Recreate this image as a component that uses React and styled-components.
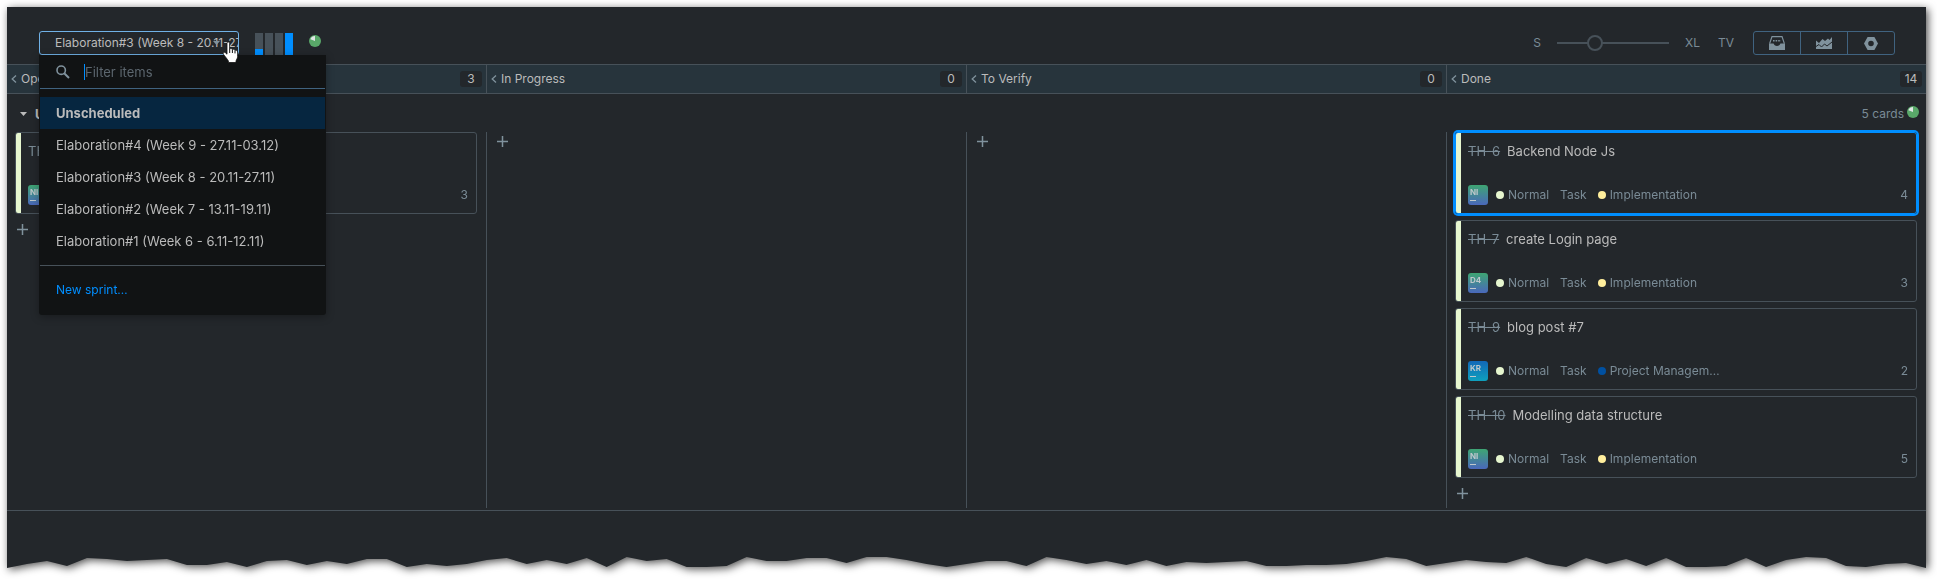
import React, { useState } from "react";
import styled, { createGlobalStyle, css } from "styled-components";

const c = {
  bg: "#23272b",
  header: "#27343c",
  line: "#475159",
  border: "#406380",
  borderHover: "#70b1e6",
  text: "#bbbbbb",
  muted: "#7a8b96",
  icon: "#80929d",
  main: "#008eff",
  popup: "#111314",
  selected: "#062640",
};

const GlobalStyle = createGlobalStyle`
  *, *::before, *::after { box-sizing: border-box; }
  body {
    margin: 0;
    background: #ffffff;
    color: ${c.text};
    font: 13px/20px Inter, "Liberation Sans", sans-serif;
    overflow-x: hidden;
  }
  button, input { font: inherit; color: inherit; }
  button { padding: 0; border: 0; background: none; cursor: pointer; }
  ul { margin: 0; padding: 0; list-style: none; }
  h2, h3 { margin: 0; font: inherit; }
  svg { display: block; }
`;

const Page = styled.div`
  padding: 7px 11px 11px 7px;
`;

const Sheet = styled.div`
  filter: drop-shadow(2px 2px 4px rgba(0, 0, 0, 0.7));
`;

const Board = styled.main`
  background: ${c.bg};
  padding-bottom: 45px;
`;

const TornEdge = styled.svg`
  width: 100%;
  height: 12px;
  fill: ${c.bg};
`;

const Toolbar = styled.header`
  display: flex;
  align-items: center;
  padding: 24px 31px 9px 32px;
`;

const SprintPicker = styled.div`
  position: relative;
  width: 200px;
`;

const SprintButton = styled.button`
  display: flex;
  align-items: center;
  width: 100%;
  height: 24px;
  padding-left: 15px;
  border: 1px solid ${c.borderHover};
  border-radius: 3px;
  font-size: 12px;
  white-space: nowrap;
  overflow: hidden;
`;

const Caret = styled.svg`
  position: absolute;
  right: 19px;
  top: 10px;
`;

const Pointer = styled.svg`
  position: absolute;
  z-index: 3;
  left: 183px;
  top: 10px;
`;

const Menu = styled.div`
  position: absolute;
  z-index: 2;
  top: 24px;
  left: 0;
  width: 287px;
  padding: 0 1px 9px;
  background: ${c.popup};
  border-radius: 0 0 3px 3px;
  box-shadow: 0 2px 8px rgba(0, 0, 0, 0.3);
`;

const Filter = styled.label`
  display: flex;
  align-items: center;
  gap: 14px;
  height: 34px;
  padding-left: 16px;
  border-bottom: 1px solid ${c.border};
`;

const FilterInput = styled.input`
  flex: 1;
  min-width: 0;
  height: 16px;
  padding: 0;
  border: 0;
  border-left: 1px solid ${c.main};
  outline: none;
  background: none;
  &::placeholder { color: #5c666e; opacity: 1; }
`;

const SprintList = styled.ul`
  padding: 8px 0;
  border-bottom: 1px solid ${c.line};
`;

const MenuItem = styled.button`
  display: block;
  width: 100%;
  height: 32px;
  padding-left: 16px;
  text-align: left;
  ${(p) => p.$active && css`background: ${c.selected}; font-weight: 700;`}
  ${(p) => p.$link && css`color: ${c.main}; margin-top: 8px; font-size: 12px;`}
`;

const Chart = styled.div`
  display: flex;
  align-self: flex-end;
  gap: 2px;
  margin-left: 16px;
`;

const Bar = styled.span`
  display: flex;
  align-items: flex-end;
  width: 8px;
  height: 22px;
  background: ${c.line};
  &::after {
    content: "";
    width: 100%;
    height: ${(p) => p.$fill}%;
    background: ${c.main};
  }
`;

const PieSlot = styled.span`
  margin: 0 0 4px 16px;
`;

const SizeControl = styled.div`
  display: flex;
  align-items: center;
  gap: 16px;
  margin-left: auto;
  font-size: 12px;
  color: ${c.muted};
`;

const Range = styled.input`
  appearance: none;
  width: 112px;
  height: 16px;
  margin: 0;
  background: linear-gradient(${c.line}, ${c.line}) center / 100% 2px no-repeat;
  &::-webkit-slider-thumb {
    appearance: none;
    width: 16px;
    height: 16px;
    border: 2px solid ${c.line};
    border-radius: 50%;
    background: ${c.bg};
  }
`;

const TvButton = styled.button`
  margin-left: 2px;
`;

const ButtonGroup = styled.div`
  display: flex;
  margin-left: 19px;
  height: 24px;
  border: 1px solid ${c.border};
  border-radius: 3px;
`;

const IconButton = styled.button`
  display: flex;
  align-items: center;
  justify-content: center;
  width: 47px;
  color: ${c.icon};
  & + & { border-left: 1px solid ${c.border}; }
  &:first-child { width: 46px; }
`;

const Columns = styled.div`
  display: grid;
  grid-template-columns: repeat(4, 1fr);
  margin-left: -1px;
`;

const HeaderRow = styled.div`
  background: ${c.header};
  border: solid ${c.line};
  border-width: 1px 0;
`;

const ColumnHeader = styled.div`
  display: flex;
  align-items: center;
  gap: 3px;
  height: 28px;
  padding: 0 4px;
  border-left: 1px solid ${(p) => (p.$first ? "transparent" : c.line)};
  font-size: 12px;
  h2 { flex: 1; }
`;

const Collapse = styled.button`
  width: 7px;
  color: ${c.icon};
`;

const Count = styled.span`
  min-width: 22px;
  height: 16px;
  border-radius: 3px;
  background: ${c.bg};
  line-height: 16px;
  text-align: center;
`;

const Swimlane = styled.section`
  border-bottom: 1px solid ${c.line};
  padding-bottom: 2px;
`;

const SwimlaneHeader = styled.div`
  display: flex;
  align-items: center;
  height: 38px;
  padding: 2px 7px 0 13px;
  h3 { flex: 1; font-weight: 700; }
`;

const Toggle = styled.button`
  width: 8px;
  margin-right: 7px;
  color: ${c.text};
`;

const CardTotal = styled.span`
  display: flex;
  align-items: center;
  gap: 3px;
  font-size: 12px;
  color: ${c.muted};
  svg { margin-bottom: 4px; }
`;

const Column = styled.div`
  display: flex;
  flex-direction: column;
  gap: 6px;
  padding: 0 9px 6px 8px;
  border-left: 1px solid ${(p) => (p.$first ? "transparent" : c.line)};
`;

const CardBox = styled.article`
  display: flex;
  flex-direction: column;
  justify-content: space-between;
  height: 82px;
  padding: 8px 8px 8px 12px;
  border: 1px solid ${(p) => (p.$focused ? c.main : c.line)};
  border-radius: 3px;
  background: linear-gradient(#e6f6cf, #e6f6cf) left / 5px 100% no-repeat;
  ${(p) => p.$focused && css`box-shadow: 0 0 0 2px ${c.main};`}
`;

const CardTitle = styled.div`
  display: flex;
  gap: 7px;
`;

const IssueId = styled.a`
  color: ${c.muted};
  text-decoration: ${(p) => (p.$done ? "line-through" : "none")};
`;

const CardMeta = styled.div`
  display: flex;
  align-items: center;
  color: ${c.muted};
  font-size: 12px;
`;

const Avatar = styled.span`
  width: 20px;
  height: 20px;
  margin-right: 8px;
  padding: 3px 2px;
  border-radius: 3px;
  background: linear-gradient(${(p) => p.$from}, ${(p) => p.$to});
  color: #bfc8cc;
  font-size: 8px;
  font-weight: 700;
  line-height: 8px;
  &::after {
    content: "";
    display: block;
    width: 6px;
    height: 1px;
    margin-top: 4px;
    background: #bfc8cc;
  }
`;

const Field = styled.span`
  display: flex;
  align-items: center;
  gap: 4px;
  margin-right: 11px;
`;

const Dot = styled.i`
  width: 8px;
  height: 8px;
  border-radius: 50%;
  background: ${(p) => p.$color};
`;

const Estimate = styled.span`
  margin-left: auto;
`;

const AddButton = styled.button`
  display: flex;
  align-items: center;
  justify-content: center;
  width: 14px;
  height: 18px;
  color: ${c.icon};
`;

const Pie = () => (
  <svg width="12" height="12" viewBox="0 0 12 12" aria-hidden="true">
    <circle cx="6" cy="6" r="6" fill="#59a869" />
    <path d="M6 6V1A5 5 0 0 0 1.4 4.2Z" fill="#dfe5e5" />
  </svg>
);

const TORN = [
  78, 74, 71, 76, 68, 69, 71, 70, 69, 75, 75, 72, 77, 71, 70, 75, 71, 74, 69, 69, 77, 74, 76, 74, 70,
  68, 74, 70, 74, 68, 77, 67, 71, 69, 77, 77, 76, 67, 71, 71, 68, 68, 73, 67, 67, 70, 74, 77, 74, 71,
  71, 76, 67, 70, 74, 71, 75, 70, 76, 72, 73, 72, 71, 76, 76, 75, 75, 74, 71, 67, 69, 76, 73, 70, 72,
  73, 67, 74, 77, 68, 74, 69, 76, 68, 77, 77, 76, 68, 77, 70, 67, 68, 76, 77, 74, 73, 78,
];
const tornPoints = `0,0 ${TORN.map((y, i) => `${i * 20},${y - 66}`).join(" ")} 1920,0`;

const sprints = [
  "Unscheduled",
  "Elaboration#4 (Week 9 - 27.11-03.12)",
  "Elaboration#3 (Week 8 - 20.11-27.11)",
  "Elaboration#2 (Week 7 - 13.11-19.11)",
  "Elaboration#1 (Week 6 - 6.11-12.11)",
];

const green = ["#3ea573", "#4a68bb"];
const blue = ["#1268b8", "#0fa0bd"];
const impl = { label: "Implementation", color: "#ffee9c" };

const columns = [
  { name: "Open", count: 3, cards: [{ id: "TH-8", title: "", who: "NI", tint: green, area: impl, points: 3 }] },
  { name: "In Progress", count: 0, cards: [] },
  { name: "To Verify", count: 0, cards: [] },
  {
    name: "Done",
    count: 14,
    done: true,
    cards: [
      { id: "TH-6", title: "Backend Node Js", who: "NI", tint: green, area: impl, points: 4, focused: true },
      { id: "TH-7", title: "create Login page", who: "D4", tint: green, area: impl, points: 3 },
      { id: "TH-9", title: "blog post #7", who: "KR", tint: blue, area: { label: "Project Managem…", color: "#0050a1" }, points: 2 },
      { id: "TH-10", title: "Modelling data structure", who: "NI", tint: green, area: impl, points: 5 },
    ],
  },
];

const Card = ({ card, done }) => (
  <CardBox $focused={card.focused}>
    <CardTitle>
      <IssueId href={`#${card.id}`} $done={done}>{card.id}</IssueId>
      <span>{card.title}</span>
    </CardTitle>
    <CardMeta>
      <Avatar $from={card.tint[0]} $to={card.tint[1]}>{card.who}</Avatar>
      <Field><Dot $color="#e6f6cf" />Normal</Field>
      <Field>Task</Field>
      <Field><Dot $color={card.area.color} />{card.area.label}</Field>
      <Estimate>{card.points}</Estimate>
    </CardMeta>
  </CardBox>
);

export default function App() {
  const [size, setSize] = useState(1.25);
  return (
    <Page>
      <GlobalStyle />
      <Sheet>
        <Board>
          <Toolbar>
            <SprintPicker>
              <SprintButton aria-haspopup="listbox" aria-expanded="true">
                Elaboration#3 (Week 8 - 20.11-27.11)
              </SprintButton>
              <Caret width="7" height="4" viewBox="0 0 7 4" fill={c.icon} aria-hidden="true">
                <path d="M0 0H7L3.5 4Z" />
              </Caret>
              <Menu>
                <Filter>
                  <svg width="14" height="14" viewBox="0 0 14 14" fill="none" stroke={c.icon} aria-hidden="true">
                    <circle cx="5.2" cy="5.2" r="4.2" strokeWidth="1.6" />
                    <path d="M8.2 8.2L13 13" strokeWidth="2" />
                  </svg>
                  <FilterInput placeholder="Filter items" aria-label="Filter items" />
                </Filter>
                <SprintList>
                  {sprints.map((s, i) => (
                    <li key={s}><MenuItem $active={i === 0}>{s}</MenuItem></li>
                  ))}
                </SprintList>
                <MenuItem $link>New sprint…</MenuItem>
              </Menu>
              <Pointer width="18" height="23" viewBox="0 0 18 23" aria-hidden="true">
                <path
                  d="M5 2.2C5 .6 7.6.6 7.6 2.2V8C8.4 7.2 10 7.5 10.3 8.5C11.2 7.9 12.6 8.3 12.9 9.4C14 8.9 15.6 9.5 15.6 11V15.5C15.6 17.5 14.4 18.5 14 20V21.5H6.4V20C5.4 18 3 15.6 1.4 13.2C.6 11.8 2.2 10.7 3.4 11.7L5 13.2Z"
                  fill="#fff" stroke="#111" strokeWidth=".8"
                />
                <path d="M7.7 8V12M10.4 8.8V12M13 9.8V12.4" stroke="#111" strokeWidth="1" />
              </Pointer>
            </SprintPicker>
            <Chart>
              {[28, 0, 0, 100].map((v, i) => <Bar key={i} $fill={v} />)}
            </Chart>
            <PieSlot><Pie /></PieSlot>
            <SizeControl>
              <span>S</span>
              <Range type="range" min="0" max="4" step="any" value={size} onChange={(e) => setSize(e.target.value)} aria-label="Card size" />
              <span>XL</span>
              <TvButton>TV</TvButton>
            </SizeControl>
            <ButtonGroup>
              <IconButton aria-label="Backlog">
                <svg width="16" height="14" viewBox="0 0 16 14" fill="currentColor">
                  <path d="M0 7.5H4.6C5 9 6.2 10 8 10S11 9 11.4 7.5H16V14H0Z" />
                  <path d="M.6 7.6L3 .6H13L15.4 7.6" fill="none" stroke="currentColor" strokeWidth="1.2" />
                  <path d="M4 4.8H12" stroke="currentColor" strokeWidth="1.4" strokeDasharray="1.6 1" />
                </svg>
              </IconButton>
              <IconButton aria-label="Charts">
                <svg width="16" height="12" viewBox="0 0 16 12">
                  <path d="M0 3.5L3 6L6.5 2L9 4L12 1.5L13.5 3L16 0V12H0Z" fill="currentColor" />
                  <path d="M0 9.5L3 7.5L5.5 10L8.5 7L11 9L16 5" fill="none" stroke={c.bg} strokeWidth="1" />
                </svg>
              </IconButton>
              <IconButton aria-label="Settings">
                <svg width="14" height="13" viewBox="0 0 14 13" fill="currentColor" fillRule="evenodd">
                  <path d="M3.6 0H10.4L14 6.5L10.4 13H3.6L0 6.5ZM7 3.7A2.8 2.8 0 1 0 7 9.3A2.8 2.8 0 1 0 7 3.7Z" />
                </svg>
              </IconButton>
            </ButtonGroup>
          </Toolbar>

          <HeaderRow>
            <Columns>
              {columns.map((col, i) => (
                <ColumnHeader key={col.name} $first={i === 0}>
                  <Collapse aria-label={`Collapse ${col.name}`}>
                    <svg width="6" height="8" viewBox="0 0 6 8" fill="none" stroke="currentColor" strokeWidth="1.3">
                      <path d="M5 .5L1.2 4L5 7.5" />
                    </svg>
                  </Collapse>
                  <h2>{col.name}</h2>
                  <Count>{col.count}</Count>
                </ColumnHeader>
              ))}
            </Columns>
          </HeaderRow>

          <Swimlane>
            <SwimlaneHeader>
              <Toggle aria-label="Collapse swimlane">
                <svg width="7" height="4" viewBox="0 0 7 4" fill="currentColor"><path d="M0 0H7L3.5 4Z" /></svg>
              </Toggle>
              <h3>Uncategorized Cards</h3>
              <CardTotal>5 cards <Pie /></CardTotal>
            </SwimlaneHeader>
            <Columns>
              {columns.map((col, i) => (
                <Column key={col.name} $first={i === 0}>
                  {col.cards.map((card) => <Card key={card.id} card={card} done={col.done} />)}
                  <AddButton aria-label={`Add card to ${col.name}`}>
                    <svg width="11" height="11" viewBox="0 0 11 11" stroke="currentColor" strokeWidth="1.5">
                      <path d="M5.5 0V11M0 5.5H11" />
                    </svg>
                  </AddButton>
                </Column>
              ))}
            </Columns>
          </Swimlane>
        </Board>
        <TornEdge viewBox="0 0 1920 12" preserveAspectRatio="none" aria-hidden="true">
          <polygon points={tornPoints} />
        </TornEdge>
      </Sheet>
    </Page>
  );
}
